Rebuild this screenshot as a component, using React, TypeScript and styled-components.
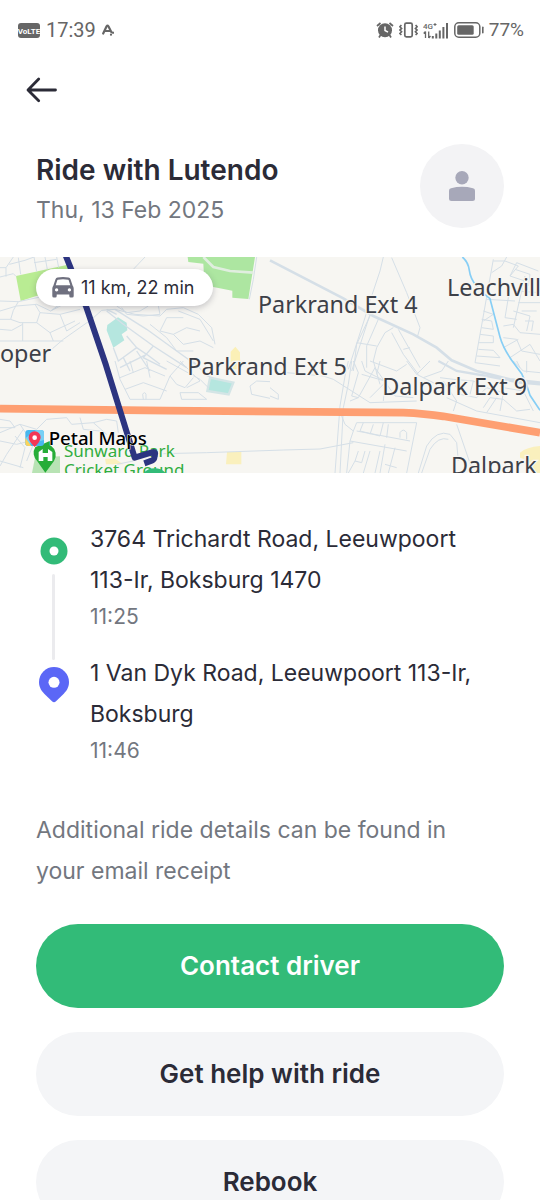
import React from "react";
import styled, { createGlobalStyle } from "styled-components";

const GlobalStyle = createGlobalStyle`
  * { box-sizing: border-box; }
  body {
    margin: 0;
    background: #fff;
    color: #2b2b37;
    font-family: Inter, "Liberation Sans", sans-serif;
  }
  h1, h2, p, ol { margin: 0; padding: 0; }
`;

const Screen = styled.main`
  display: flex;
  flex-direction: column;
  height: 100vh;
  overflow: hidden;
`;

const StatusBar = styled.div`
  display: flex;
  flex-shrink: 0;
  justify-content: space-between;
  align-items: center;
  height: 60px;
  padding: 0 16px 0 18px;
  color: #666;
  font-family: Roboto, sans-serif;
  line-height: 24px;
`;

const StatusGroup = styled.div<{ $gap: number; $size: number }>`
  display: flex;
  align-items: center;
  gap: ${(p) => p.$gap}px;
  font-size: ${(p) => p.$size}px;
  svg { display: block; }
`;

const NavBar = styled.nav`
  display: flex;
  flex-shrink: 0;
  align-items: center;
  height: 60px;
  padding: 0 24px;
`;

const BackButton = styled.button`
  display: flex;
  padding: 0;
  border: 0;
  background: none;
  cursor: pointer;
`;

const Header = styled.header`
  display: flex;
  flex-shrink: 0;
  justify-content: space-between;
  padding: 24px 36px 27px;
`;

const Title = styled.h1`
  padding-top: 6px;
  font-size: 28px;
  font-weight: 600;
  line-height: 40px;
`;

const DateLine = styled.p`
  color: #73777f;
  font-size: 23px;
  line-height: 40px;
`;

const Avatar = styled.div`
  display: flex;
  align-items: center;
  justify-content: center;
  width: 84px;
  height: 84px;
  border-radius: 50%;
  background: #f3f3f5;
`;

const MapPanel = styled.section`
  position: relative;
  flex-shrink: 0;
  height: 216px;
  overflow: hidden;
  background: #f7f6f2;
`;

const MapCanvas = styled.svg`
  display: block;
  width: 100%;
  height: 100%;
`;

const DistanceChip = styled.div`
  position: absolute;
  top: 12px;
  left: 36px;
  display: flex;
  align-items: center;
  gap: 7px;
  height: 37px;
  padding: 0 19px 0 16px;
  border-radius: 19px;
  background: #fff;
  box-shadow: 0 2px 6px rgba(40, 40, 60, 0.25);
  font-size: 18px;
  line-height: 24px;
`;

const Details = styled.section`
  display: flex;
  flex-direction: column;
  padding: 46px 36px 0;
`;

const Stops = styled.ol`
  list-style: none;
`;

const Stop = styled.li`
  display: grid;
  grid-template-columns: 36px 1fr;
  column-gap: 18px;
`;

const Rail = styled.div<{ $top: number }>`
  display: flex;
  flex-direction: column;
  align-items: center;
  padding-top: ${(p) => p.$top}px;
  svg { display: block; flex-shrink: 0; }
`;

const Connector = styled.span`
  flex: 1;
  width: 3px;
  margin: 9px 2px -7px 0;
  border-radius: 2px;
  background: #ebebee;
`;

const StopText = styled.div`
  padding-bottom: 20px;
`;

const Address = styled.p`
  font-size: 23px;
  line-height: 41px;
`;

const StopTime = styled.time`
  display: block;
  color: #73777f;
  font-size: 21px;
  line-height: 32px;
`;

const Note = styled.p`
  padding: 23px 36px 32px 0;
  color: #73777f;
  font-size: 23px;
  line-height: 41px;
`;

const Actions = styled.div`
  display: flex;
  flex-direction: column;
  gap: 24px;
`;

const ActionButton = styled.button<{ $primary?: boolean }>`
  height: 84px;
  border: 0;
  border-radius: 42px;
  background: ${(p) => (p.$primary ? "#32bb78" : "#f4f5f7")};
  color: ${(p) => (p.$primary ? "#fff" : "#2b2b37")};
  font: 600 26px/32px Inter, "Liberation Sans", sans-serif;
  cursor: pointer;
`;

const VolteIcon = () => (
  <svg width="22" height="15" viewBox="0 0 22 15">
    <rect width="22" height="15" rx="3" fill="#666" />
    <text x="11" y="11" textAnchor="middle" fill="#fff" fontFamily="Roboto, sans-serif" fontSize="8" fontWeight="700">VoLTE</text>
  </svg>
);

const AssistIcon = () => (
  <svg width="12" height="12" viewBox="0 0 12 12" fill="none" stroke="#666" strokeWidth="2.2" strokeLinecap="round" strokeLinejoin="round">
    <path d="M1.200 9.500 4.600 2.300Q5.500 1 6.400 2.300L9.300 8M3.500 7h5M9 10.600v.1M11 8.700v.1" />
  </svg>
);

const AlarmIcon = () => (
  <svg width="18" height="16" viewBox="0 0 18 16">
    <circle cx="9" cy="8.200" r="7" fill="#666" />
    <path d="M1 4 4.500 1M17 4 13.500 1M4.500 13 3 15.500M13.500 13l1.500 2.500" stroke="#666" strokeWidth="1.700" fill="none" />
    <path d="M9 4.500v4l3 1.700" stroke="#fff" strokeWidth="1.500" fill="none" />
  </svg>
);

const VibrateIcon = () => (
  <svg width="19" height="16" viewBox="0 0 19 16" fill="none" stroke="#666">
    <rect x="5.800" y="1.200" width="7.400" height="13.600" rx="1.500" strokeWidth="1.700" />
    <path d="M2.400 3 .9 4.700 2.600 6.400 .9 8.100 2.600 9.800 .9 11.500 2.400 13M16.600 3l1.500 1.700-1.700 1.700 1.700 1.700-1.700 1.700 1.700 1.700-1.500 1.500" strokeWidth="1.600" />
  </svg>
);

const SignalIcon = () => (
  <svg width="26" height="17" viewBox="0 0 26 17" fill="#666">
    <text x="0" y="7" fontFamily="Roboto, sans-serif" fontSize="8" fontWeight="500">4G</text>
    <path d="M10.500 2h3v1h-3zM11.500 1h1v3h-1z" />
    <path d="M2.500 9.500v6.500M.7 11.500l1.800-2M5.700 9.500v6.500M7.500 14l-1.800 2" stroke="#666" strokeWidth="1.300" />
    <path d="M8.800 14h2v2.500h-2zM12.300 11.500h2v5h-2zM15.800 8.500h2v8h-2zM19.400 5h2v11.500h-2zM23 1h2v15.500h-2z" />
  </svg>
);

const BatteryIcon = () => (
  <svg width="30" height="16" viewBox="0 0 30 16">
    <rect x=".8" y=".8" width="25" height="14.400" rx="4" fill="none" stroke="#666" strokeWidth="1.500" />
    <rect x="3.200" y="3.200" width="16.500" height="9.600" rx="1.500" fill="#666" />
    <rect x="28" y="4.500" width="1.600" height="7" rx=".8" fill="#666" />
  </svg>
);

const ArrowIcon = () => (
  <svg width="36" height="36" viewBox="0 0 36 36" fill="none" stroke="#2b2b37" strokeWidth="2.800" strokeLinecap="round" strokeLinejoin="round">
    <path d="M31.500 18H4.500M14.700 7 4 18l10.700 10.700" />
  </svg>
);

const PersonIcon = () => (
  <svg width="26" height="30" viewBox="0 0 26 30" fill="#a7a8b9">
    <circle cx="13" cy="6.700" r="6.700" />
    <path d="M0 19.500Q0 17.700 2 17.200 13 14.500 24 17.200 26 17.700 26 19.500V27.500Q26 30 23.500 30H2.500Q0 30 0 27.500Z" />
  </svg>
);

const CarIcon = () => (
  <svg width="22" height="21" viewBox="0 0 22 21">
    <path fill="#6f707f" fillRule="evenodd" d="M5.500.5Q11-.4 16.500.5 18 .8 18.500 2.200L20.600 8.500Q21.700 9.800 21.700 11.500V19Q21.700 20.500 20.200 20.500H18.700Q17.300 20.500 17.300 19V17.500H4.700V19Q4.700 20.500 3.300 20.500H1.800Q.3 20.500 .3 19V11.500Q.3 9.800 1.400 8.500L3.500 2.200Q4 .8 5.500.5ZM5.800 2.700Q5.400 2.800 5.200 3.400L3.700 8.300H18.300L16.800 3.400Q16.600 2.800 16.200 2.700 11 1.900 5.800 2.700ZM4.600 11.300a1.600 1.600 0 1 0 .01 0ZM17.400 11.300a1.600 1.600 0 1 0 .01 0Z" />
  </svg>
);

const OriginIcon = () => (
  <svg width="28" height="28" viewBox="0 0 28 28">
    <circle cx="14" cy="14" r="13.500" fill="#32bb78" />
    <circle cx="14" cy="14" r="4.500" fill="#fff" />
  </svg>
);

const DestinationIcon = () => (
  <svg width="30" height="36" viewBox="0 0 30 36">
    <path fill="#5b67f6" d="M15 0A15 15 0 0 1 30 15C30 21 27 24.500 23.500 28L17 34.300Q15 36 13 34.300L6.500 28C3 24.500 0 21 0 15A15 15 0 0 1 15 0Z" />
    <circle cx="15" cy="15.300" r="5.500" fill="#fff" />
  </svg>
);

const StreetMap = () => (
  <MapCanvas viewBox="0 0 1620 648" preserveAspectRatio="xMidYMid slice" role="img" aria-label="Map of the ride through Boksburg">
    <g transform="translate(0 -18)">
      <path fill="#b9ec93" d="M48 75 200 42 215 60 130 128 62 150Z" />
      <path fill="#ade6a1" d="M563 18H765L745 144 697 140V119L640 108 612 75 610 38 565 33Z" />
      <path fill="none" stroke="#e0eedf" strokeWidth="8" d="M610 18 640 48 690 60 760 65" />
      <path fill="#b5e6df" d="M322 222 354 199 380 215 382 238 365 250 373 268 340 290 320 238Z" />
      <path fill="#fbf0b7" d="M692 302 706 287 720 304V320L722 355H692Z" />
    </g>
    <g transform="translate(0 312)">
      <path fill="#b5e6df" stroke="#d4e5e6" strokeWidth="7" d="M630 50 700 65 686 100 622 90Z" />
      <path fill="#faf0bd" d="M681 273H724V310H678ZM315 293H345L370 310H318ZM1560 275Q1580 258 1620 255V336H1598Q1590 295 1560 290Z" />
      <path fill="#b8e3b4" d="M105 290 180 286V336H96Z" />
    </g>
    <g fill="none" stroke="#d5dfe7" strokeWidth="3">
      <g transform="translate(0 -18)">
        <path d="M0 50H18L40 18M18 50V77M0 78 40 68 48 76 M28 40 75 28M55 20 62 70M75 28 102 18 110 62M102 35 170 25M135 18 142 55M170 18 176 50" />
        <path d="M0 150 55 152 205 120M0 180 50 165 110 160 152 180 200 145M55 152 40 178 32 205 60 215H110L120 185 105 160M0 235 35 238 68 220M68 215V270M0 270H190M0 205H32M110 215 150 245 160 270M120 185 180 190 200 240M152 180 190 160 250 165M180 190 240 175M150 245 225 210M200 240 240 215" />
        <path d="M155 295 190 265 275 205 305 178 345 175 405 190 480 195 500 175 550 170 595 190 635 230 645 280M400 55 435 18M350 165 380 185 420 180 445 165M365 170 380 190 430 195 480 190 475 165M550 200 500 200 480 240 520 250 560 230 600 240M535 180 600 205 640 270M520 250 550 280 600 270 640 290M450 220 500 260 530 300 580 300" />
        <path d="M320 180 370 220 460 285 560 350M345 175 440 235 530 300 600 350M320 175 350 190M340 290 355 330 410 290 440 310 360 350M370 320 390 360M410 300 450 360M440 310 480 340M410 290 380 255M460 285 430 320 500 355" strokeWidth="4" />
        <path d="M770 18 760 85 748 145" />
      </g>
      <g transform="translate(810 -18)">
        <path strokeWidth="8" d="M0 28 220 142 310 195 430 250 500 290 545 328 620 360 720 385 810 395" />
        <path d="M340 18 330 60 300 150 285 200 235 355M300 190 245 360M300 195 260 280 250 360M325 205 290 285 290 350M365 20 410 125 450 230 442 258M370 230 345 245 320 290 310 330 330 400 M365 245 400 310 445 370M385 235 450 350M400 295 420 290M260 275 320 285M535 330 515 360 460 380" />
        <path d="M670 25 615 335 690 345M665 65 695 45 710 18M670 30 705 30 745 45 720 75 765 90M720 75 740 35 805 60M735 55 780 70 775 105M650 145 735 150M720 110 705 200 740 205M765 75 730 230M740 120 810 125M745 155H810M755 180H800M640 180 670 190M635 205 665 210 670 235 635 230M630 250 670 255V275H625M625 295 670 298 690 320 620 315M640 210 670 190M700 225 730 220 750 245 810 250M730 180 780 195 770 240M765 210 790 210 785 240M700 260 740 265 755 300 810 310M700 290 745 265M720 320 780 280 810 330" />
      </g>
      <g transform="translate(0 312)">
        <path d="M345 0 360 55 390 115H480L510 45 550 0M360 50 435 20 495 45M375 85 430 65 500 90M390 0 400 35M440 0 450 50M430 115 428 100Q434 90 438 100V115M510 45 530 70 555 80 580 50M500 0 600 55 625 80M540 95H595L620 115H545ZM580 0 620 45 640 50M750 75 770 60 810 62M750 75 755 100 810 112M540 0 600 60 560 80" />
        <path d="M0 175 30 180 45 200H0M0 215 60 190 110 205 140 175 200 170 215 190 280 185 320 175 350 180 355 215M70 205 20 280 0 315M60 190 100 250 80 300M0 240 50 250 90 240M240 170 250 205 300 210M280 185 320 220M45 225 75 260 60 320M0 300 70 320" />
        <path d="M490 278 620 275 850 267 960 264 1060 245M350 310 400 300" />
      </g>
      <g transform="translate(810 312)">
        <path d="M0 80 25 100 25 115 0 105M50 35 160 45 190 55 300 125 440 120M235 0 225 45 210 135 195 336M245 0 235 70 220 140 210 336M250 0 265 35 245 105 265 110 315 20M275 0 285 30 345 60 340 120M300 0 380 30 410 10M345 60 275 40M315 20 375 105 430 110M265 110 240 120M330 0 320 40M410 0 440 40 500 70M350 60 300 110M440 40 480 0" />
        <path d="M215 165 225 190 250 210 260 185 440 185 410 336M250 210 240 240 230 336M240 240 410 270M260 210 420 240M280 185 270 210 330 225 340 185M390 230V215Q400 200 410 215V235M310 190 300 220M355 190 350 230M265 270 255 300 275 305 285 270M300 270 280 336M330 270 315 336M345 250 330 336M375 260 355 336M255 300 235 336M345 310 380 320" />
        <path d="M445 336 470 255Q500 205 540 220L560 245 565 300M455 336 480 265Q505 225 535 235M560 190 610 336M520 60 560 120 550 150M530 110 620 150 810 185" />
        <path strokeWidth="7" d="M505 0 560 30 650 45 750 65 810 70" />
        <path d="M510 50 550 55 610 60 650 80M550 60 570 100 620 110 650 80 700 95 690 150M610 60 600 100M640 140 660 110 700 115 740 150 780 145M680 110 650 155M700 80 760 90 790 150M730 0 760 30 810 35M750 20 740 0M770 0V35" />
      </g>
    </g>
    <path fill="none" stroke="#87cef5" strokeWidth="5" d="M1387 0Q1405 15 1408 40T1430 88 1470 125Q1492 210 1500 240T1535 310L1565 350Q1580 380 1590 415L1620 460" />
    <path fill="none" stroke="#fe9f72" strokeWidth="23" d="M0 455 500 461 1210 467Q1275 470 1330 478L1620 527" />
    <g fill="#3d4048" stroke="#f7f6f2" strokeWidth="8" paintOrder="stroke" fontFamily="Noto Sans, sans-serif" fontSize="70">
      <text x="774" y="168">Parkrand Ext 4</text>
      <text x="1341" y="118">Leachville</text>
      <text x="0" y="315">oper</text>
      <text x="562" y="354">Parkrand Ext 5</text>
      <text x="1147" y="413">Dalpark Ext 9</text>
      <text x="1353" y="651">Dalpark</text>
    </g>
    <g fill="#31ad3f" stroke="#f7f6f2" strokeWidth="6" paintOrder="stroke" fontFamily="Noto Sans, sans-serif" fontSize="51">
      <text x="192" y="599">Sunward Park</text>
      <text x="192" y="656">Cricket Ground</text>
    </g>
    <path fill="#27ad38" d="M136 647 112 613A34 34 0 0 1 106 570L124 563 149 552 153 566A34 34 0 0 1 162 612Z" />
    <path fill="#fff" d="M116 585 128 576V588H144V576L157 585V612H143V600H130V612H116Z" />
    <path fill="none" stroke="#2c3480" strokeWidth="18" strokeLinejoin="round" d="M194 -12 258 148 318 325 404 602 456 586Q467 583 465 591L463 602Q462 608 455 611L433 619" />
    <circle cx="464" cy="680" r="46" fill="#32bb78" />
    <rect x="76" y="519" width="56" height="48" rx="9" fill="#47b7ef" />
    <path fill="#78d0f5" d="M76 544 108 519H123Q132 519 132 528V549L76 564Z" />
    <path fill="#fcd35c" d="M76 542 94 567H85Q76 567 76 558Z" />
    <path fill="#f33755" d="M104 570Q85 552 86 541A18 18 0 0 1 122 541Q122 553 104 570Z" />
    <circle cx="104" cy="542" r="7" fill="#fff" />
    <text x="146" y="564" fill="#000" stroke="#fff" strokeWidth="3" paintOrder="stroke" fontFamily="Noto Sans, sans-serif" fontSize="56" fontWeight="500">Petal Maps</text>
  </MapCanvas>
);

export default function App() {
  return (
    <Screen>
      <GlobalStyle />
      <StatusBar>
        <StatusGroup $gap={6} $size={20}>
          <VolteIcon />
          <span>17:39</span>
          <AssistIcon />
        </StatusGroup>
        <StatusGroup $gap={5} $size={19}>
          <AlarmIcon />
          <VibrateIcon />
          <SignalIcon />
          <BatteryIcon />
          <span>77%</span>
        </StatusGroup>
      </StatusBar>
      <NavBar>
        <BackButton aria-label="Back">
          <ArrowIcon />
        </BackButton>
      </NavBar>
      <Header>
        <div>
          <Title>Ride with Lutendo</Title>
          <DateLine>Thu, 13 Feb 2025</DateLine>
        </div>
        <Avatar>
          <PersonIcon />
        </Avatar>
      </Header>
      <MapPanel>
        <StreetMap />
        <DistanceChip>
          <CarIcon />
          <span>11 km, 22 min</span>
        </DistanceChip>
      </MapPanel>
      <Details>
        <Stops>
          <Stop>
            <Rail $top={18}>
              <OriginIcon />
              <Connector />
            </Rail>
            <StopText>
              <Address>3764 Trichardt Road, Leeuwpoort 113-Ir, Boksburg 1470</Address>
              <StopTime>11:25</StopTime>
            </StopText>
          </Stop>
          <Stop>
            <Rail $top={14}>
              <DestinationIcon />
            </Rail>
            <StopText>
              <Address>1 Van Dyk Road, Leeuwpoort 113-Ir, Boksburg</Address>
              <StopTime>11:46</StopTime>
            </StopText>
          </Stop>
        </Stops>
        <Note>Additional ride details can be found in your email receipt</Note>
        <Actions>
          <ActionButton $primary>Contact driver</ActionButton>
          <ActionButton>Get help with ride</ActionButton>
          <ActionButton>Rebook</ActionButton>
        </Actions>
      </Details>
    </Screen>
  );
}
